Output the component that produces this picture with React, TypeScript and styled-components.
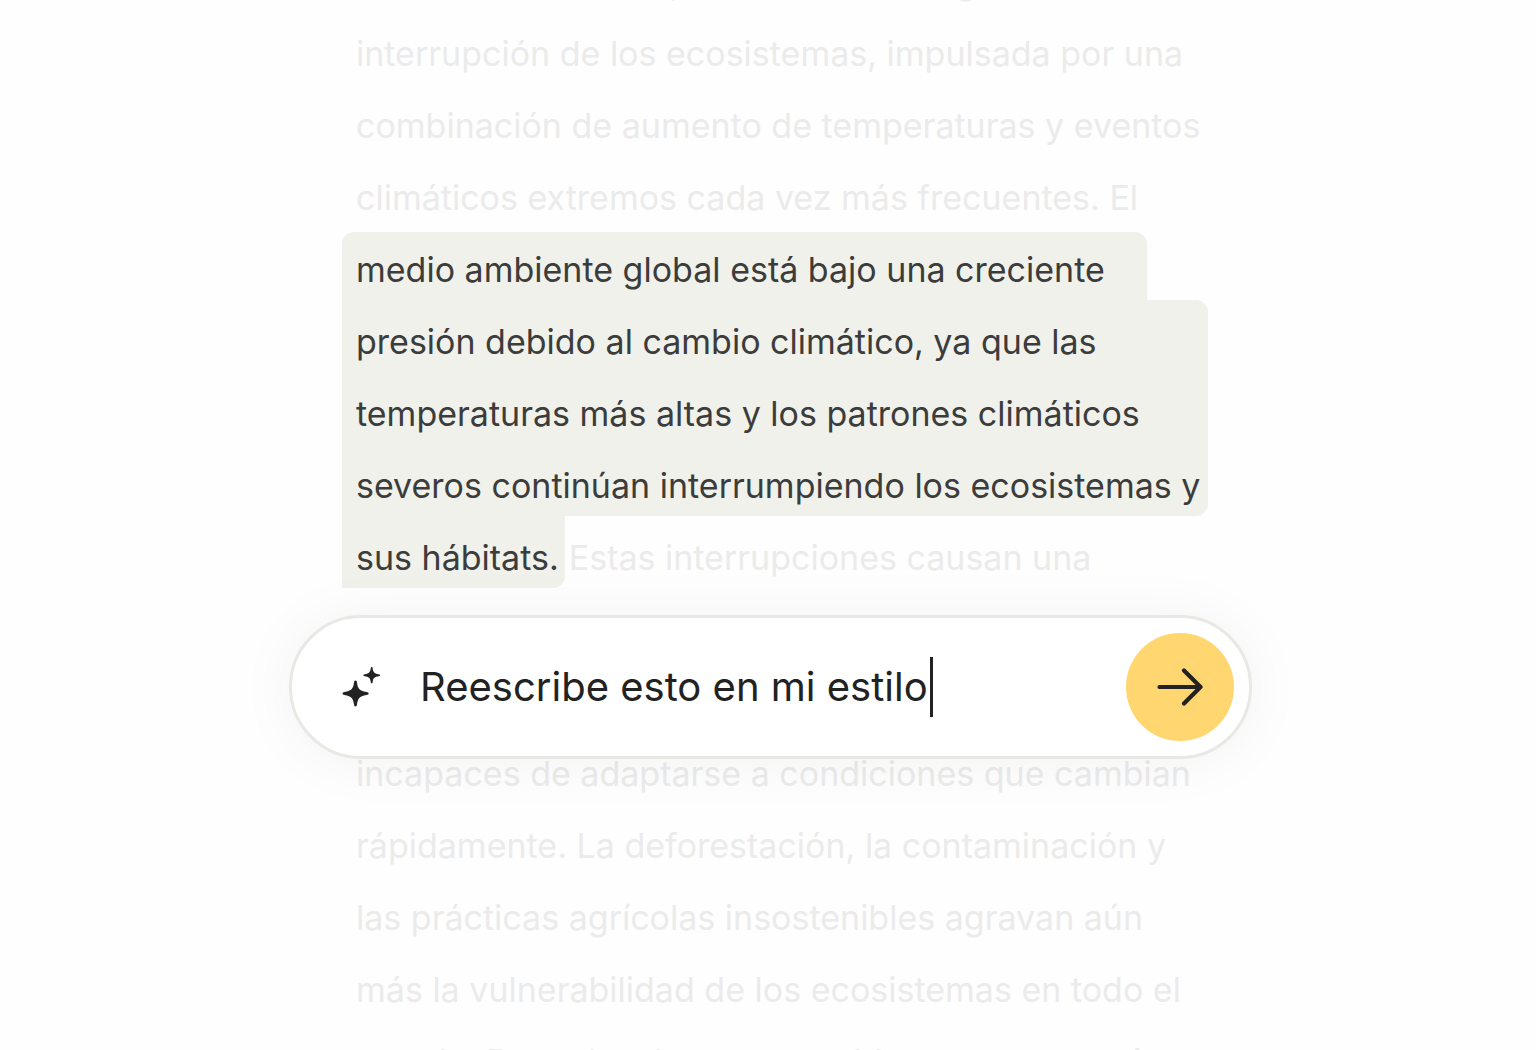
import React from "react";
import styled, { createGlobalStyle } from "styled-components";

const GlobalStyle = createGlobalStyle`
  *, *::before, *::after { box-sizing: border-box; }
  body {
    margin: 0;
    background: #fefefe;
    font-family: Inter, "Liberation Sans", sans-serif;
    overflow: hidden;
  }
`;

const Page = styled.main`
  display: flex;
  justify-content: center;
  align-items: flex-start;
  height: 100vh;
  padding-left: 5px;
  overflow: hidden;
`;

const Column = styled.div`
  display: flex;
  flex-direction: column;
  width: 100%;
  max-width: 963px;
  margin-top: -60px;
`;

const Passage = styled.div`
  display: flex;
  flex-direction: column;
  align-items: flex-start;
  padding: 0 44px 0 53px;
`;

const Line = styled.p<{ $selected?: boolean }>`
  margin: 0;
  padding: 12px 0 0 14px;
  font-size: 34px;
  line-height: 60px;
  white-space: nowrap;
  color: ${(p) => (p.$selected ? "#3c3c3c" : "#ebebeb")};
`;

const Selection = styled.div`
  align-self: stretch;
  display: flex;
  flex-direction: column;
  align-items: flex-start;
  padding-top: 4px;
`;

const SelectionTop = styled.div`
  width: 93%;
  border-radius: 12px 12px 0 0;
  background: #f0f1eb;

  ${Line} { padding-top: 8px; }
`;

const SelectionBody = styled.div`
  width: 100%;
  border-radius: 0 12px 12px 0;
  background: #f0f1eb;
`;

const SelectionEnd = styled.div`
  display: flex;
`;

const SelectionTail = styled.div`
  padding-right: 6px;
  border-radius: 0 0 12px 0;
  background: #f0f1eb;
`;

const Rest = styled(Line)`
  padding-left: 4px;
`;

const Prompt = styled.form`
  position: relative;
  z-index: 1;
  display: flex;
  align-items: center;
  height: 144px;
  margin: 27px 0 -27px;
  padding: 0 15px 0 50px;
  border: 3px solid #e8e9e4;
  border-radius: 72px;
  background: #fff;
  box-shadow: 0 2px 60px rgba(0, 0, 0, 0.05);
`;

const Sparkles = styled.svg`
  flex: none;
  width: 40px;
  height: 42px;
  margin-right: 38px;
`;

const Field = styled.div`
  flex: 1;
  min-width: 0;
  display: flex;
  align-items: center;
`;

const PromptInput = styled.input`
  field-sizing: content;
  min-width: 0;
  padding: 0;
  border: 0;
  outline: 0;
  background: transparent;
  color: #222;
  font: 400 40px/60px Inter, "Liberation Sans", sans-serif;
`;

const Caret = styled.span`
  width: 3px;
  height: 60px;
  margin-left: 2px;
  background: #222;
`;

const SendButton = styled.button`
  flex: none;
  display: grid;
  place-items: center;
  width: 108px;
  height: 108px;
  padding: 0;
  border: 0;
  border-radius: 50%;
  background: #ffd670;
  color: #222;
  cursor: pointer;
`;

const before = [
  "Muchos hábitats experimentan una significativa",
  "interrupción de los ecosistemas, impulsada por una",
  "combinación de aumento de temperaturas y eventos",
  "climáticos extremos cada vez más frecuentes. El",
];

const selected = [
  "presión debido al cambio climático, ya que las",
  "temperaturas más altas y los patrones climáticos",
  "severos continúan interrumpiendo los ecosistemas y",
];

const after = [
  "incapaces de adaptarse a condiciones que cambian",
  "rápidamente. La deforestación, la contaminación y",
  "las prácticas agrícolas insostenibles agravan aún",
  "más la vulnerabilidad de los ecosistemas en todo el",
  "mundo. Para abordar estos problemas, se necesita",
];

export default function App() {
  const [text, setText] = React.useState("Reescribe esto en mi estilo");

  return (
    <Page>
      <GlobalStyle />
      <Column>
        <Passage>
          {before.map((line) => (
            <Line key={line}>{line}</Line>
          ))}
          <Selection>
            <SelectionTop>
              <Line $selected>medio ambiente global está bajo una creciente</Line>
            </SelectionTop>
            <SelectionBody>
              {selected.map((line) => (
                <Line key={line} $selected>{line}</Line>
              ))}
            </SelectionBody>
            <SelectionEnd>
              <SelectionTail>
                <Line $selected>sus hábitats.</Line>
              </SelectionTail>
              <Rest>Estas interrupciones causan una</Rest>
            </SelectionEnd>
          </Selection>
        </Passage>
        <Prompt onSubmit={(e) => e.preventDefault()}>
          <Sparkles viewBox="0 0 40 42" fill="#222" aria-hidden="true">
            <path d="M13.5 14.5c.9 0 1.3.7 1.5 1.9.9 6.2 2 8.1 9.6 9.6 1.3.3 2.1.7 2.1 1.5s-.8 1.2-2.1 1.5c-7.6 1.5-8.7 3.4-9.6 9.6-.2 1.2-.6 1.9-1.5 1.9s-1.3-.7-1.5-1.9c-.9-6.2-2-8.1-9.6-9.6C1.3 28.7.5 28.3.5 27.500S1.300 26.300 2.400 26c7.600-1.500 8.700-3.400 9.600-9.600.2-1.200.6-1.900 1.500-1.900z" />
            <path d="M29.700 1c.6 0 .8.500.9 1.200.6 3.900 1.300 5.100 6 6 .8.200 1.400.4 1.400 1s-.6.800-1.400 1c-4.700.9-5.400 2.100-6 6-.1.700-.3 1.200-.9 1.200s-.8-.5-.9-1.200c-.6-3.900-1.300-5.100-6-6-.8-.2-1.400-.4-1.400-1s.6-.8 1.400-1c4.700-.9 5.400-2.100 6-6 .1-.7.3-1.200.9-1.200z" />
          </Sparkles>
          <Field>
            <PromptInput
              aria-label="Instrucción"
              value={text}
              onChange={(e) => setText(e.target.value)}
            />
            <Caret />
          </Field>
          <SendButton type="submit" aria-label="Enviar">
            <svg width="46" height="38" viewBox="0 0 46 38" fill="none" stroke="currentColor" strokeWidth="4.2" strokeLinecap="round" strokeLinejoin="round">
              <path d="M2.5 19H43.5M27 2.5L43.5 19L27 35.5" />
            </svg>
          </SendButton>
        </Prompt>
        <Passage>
          {after.map((line) => (
            <Line key={line}>{line}</Line>
          ))}
        </Passage>
      </Column>
    </Page>
  );
}
